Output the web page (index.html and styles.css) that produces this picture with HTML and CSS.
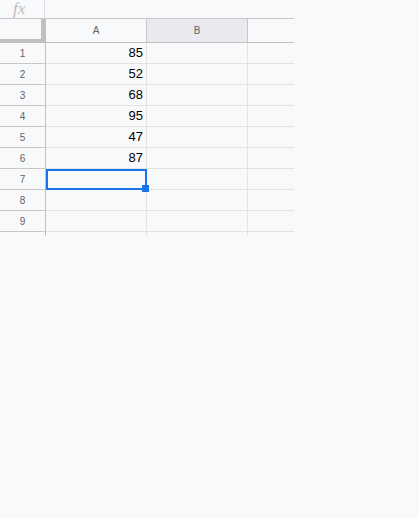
FILE: index.html
```html
<!doctype html>
<html lang="en">
<head>
  <title>Sheet</title>
  <meta charset="UTF-8">
  <link rel="stylesheet" href="styles.css">
</head>
<body>
  <div class="sheet">
    <div class="formula-bar">
      <div class="fx">fx</div>
      <div class="formula-input"></div>
    </div>
    <div class="grid">
      <div class="corner"></div>
      <div class="col-head">A</div>
      <div class="col-head active">B</div>
      <div class="col-head last"></div>

      <div class="row-head">1</div><div class="cell num">85</div><div class="cell"></div><div class="cell last"></div>
      <div class="row-head">2</div><div class="cell num">52</div><div class="cell"></div><div class="cell last"></div>
      <div class="row-head">3</div><div class="cell num">68</div><div class="cell"></div><div class="cell last"></div>
      <div class="row-head">4</div><div class="cell num">95</div><div class="cell"></div><div class="cell last"></div>
      <div class="row-head">5</div><div class="cell num">47</div><div class="cell"></div><div class="cell last"></div>
      <div class="row-head">6</div><div class="cell num">87</div><div class="cell"></div><div class="cell last"></div>
      <div class="row-head">7</div><div class="cell selected"><span class="handle"></span></div><div class="cell"></div><div class="cell last"></div>
      <div class="row-head">8</div><div class="cell"></div><div class="cell"></div><div class="cell last"></div>
      <div class="row-head">9</div><div class="cell"></div><div class="cell"></div><div class="cell last"></div>

      <div class="row-head stub"></div><div class="cell stub"></div><div class="cell stub"></div><div class="cell stub last"></div>
    </div>
  </div>
</body>
</html>
```

FILE: styles.css
```css
body {
  margin: 0;
  background: #f8f9fa;
  font-family: Arial, 'Liberation Sans', sans-serif;
}
.sheet {
  width: 294px;
}
.formula-bar {
  display: flex;
  height: 18px;
}
.fx {
  width: 45px;
  height: 18px;
  border-right: 1px solid #dadce0;
  box-sizing: border-box;
  padding-left: 13px;
  font-family: 'Liberation Serif', 'DejaVu Serif', serif;
  font-style: italic;
  font-size: 17px;
  line-height: 18px;
  color: #bdbdbd;
}
.formula-input {
  flex: 1;
}
.grid {
  display: grid;
  grid-template-columns: 46px 101px 101px 46px;
  grid-auto-rows: 21px;
  grid-template-rows: 24px;
  border-top: 1px solid #c7c7c7;
}
.grid > div {
  box-sizing: border-box;
}
.corner {
  border-right: 5px solid #c0c0c0;
  border-bottom: 4px solid #c0c0c0;
}
.col-head {
  border-right: 1px solid #c7c7c7;
  border-bottom: 1px solid #c0c0c0;
  display: flex;
  align-items: center;
  justify-content: center;
  font-size: 10px;
  color: #5f6368;
}
.col-head.active {
  background: #e8eaed;
}
.col-head.last {
  border-right: none;
}
.row-head {
  border-right: 1px solid #c0c0c0;
  border-bottom: 1px solid #c7c7c7;
  display: flex;
  align-items: center;
  justify-content: center;
  font-size: 10px;
  color: #5f6368;
}
.cell {
  border-right: 1px solid #e2e3e3;
  border-bottom: 1px solid #e2e3e3;
  font-size: 13px;
  color: #000;
  line-height: 20px;
  padding: 0 3px;
}
.cell.last {
  border-right: none;
}
.cell.num {
  text-align: right;
}
.cell.selected {
  position: relative;
}
.cell.selected::after {
  content: '';
  position: absolute;
  top: 0;
  left: 0;
  right: -1px;
  bottom: -1px;
  border: 2px solid #1a73e8;
}
.handle {
  position: absolute;
  right: -3px;
  bottom: -3px;
  width: 7px;
  height: 7px;
  background: #1a73e8;
  z-index: 1;
}
.stub {
  height: 4px;
  border-bottom: none !important;
}
```
